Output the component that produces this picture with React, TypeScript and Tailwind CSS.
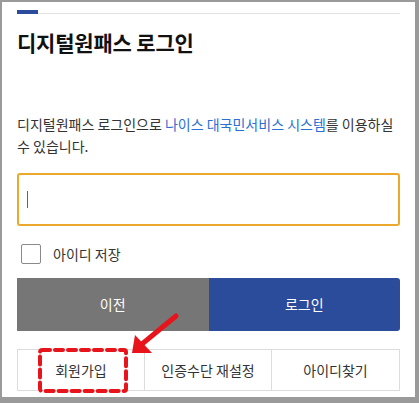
export default function App() {
  const font = { fontFamily: '"Noto Sans CJK KR", "Noto Sans", sans-serif' };
  return (
    <div
      className="relative w-[419px] h-[403px] bg-[#9a9a9a] pl-[2px] pt-[2px] pr-[4px] pb-[6px] overflow-hidden"
      style={font}
    >
      <div className="h-full bg-white px-[15px] flex flex-col">
        <div className="flex items-end mt-[8px]">
          <div className="w-[21px] h-[4px] bg-[#2b4c9b]" />
          <div className="flex-1 h-px bg-[#e2e2e2]" />
        </div>
        <h1 className="mt-[14px] text-[21px] leading-[28px] font-bold text-[#111] tracking-[-0.2px]">
          디지털원패스 로그인
        </h1>
        <p className="mt-[57px] text-[14px] leading-[22px] text-[#333]">
          디지털원패스 로그인으로 <span className="text-[#2a6fd4]">나이스 대국민서비스 시스템</span>를
          이용하실 수 있습니다.
        </p>
        <div className="mt-[16px] h-[53px] rounded-[3px] border-2 border-[#eaa92c] flex items-center pl-[8px]">
          <div className="w-px h-[17px] bg-[#666]" />
        </div>
        <label className="mt-[18px] flex items-center h-[20px]">
          <span className="ml-[4px] w-[20px] h-[20px] rounded-[2px] border-[1.5px] border-[#8a8a8a] bg-white" />
          <span className="ml-[12px] text-[14px] text-[#333]">아이디 저장</span>
        </label>
        <div className="mt-[14px] flex h-[53px]">
          <button className="flex-1 bg-[#767676] text-white text-[14px] font-normal">이전</button>
          <button className="flex-1 bg-[#2b4c9b] text-white text-[14px] font-normal rounded-r-[3px]">
            로그인
          </button>
        </div>
        <div className="mt-[18px] grid grid-cols-3 h-[42px] border border-[#dcdcdc]">
          <div className="flex items-center justify-center text-[14px] text-[#333] border-r border-[#dcdcdc]">
            회원가입
          </div>
          <div className="flex items-center justify-center text-[14px] text-[#333] border-r border-[#dcdcdc]">
            인증수단 재설정
          </div>
          <div className="flex items-center justify-center text-[14px] text-[#333]">아이디찾기</div>
        </div>
      </div>
      <svg className="absolute left-0 top-0 pointer-events-none" width="419" height="403">
        <rect
          x="40"
          y="350"
          width="86"
          height="41"
          rx="2"
          fill="none"
          stroke="#e8141c"
          strokeWidth="4"
          strokeDasharray="8 5"
          strokeLinecap="round"
        />
        <line x1="176" y1="316" x2="142" y2="344" stroke="#e8141c" strokeWidth="5" strokeLinecap="round" />
        <polygon points="132,353 135,335 152,353" fill="#e8141c" />
      </svg>
    </div>
  );
}
